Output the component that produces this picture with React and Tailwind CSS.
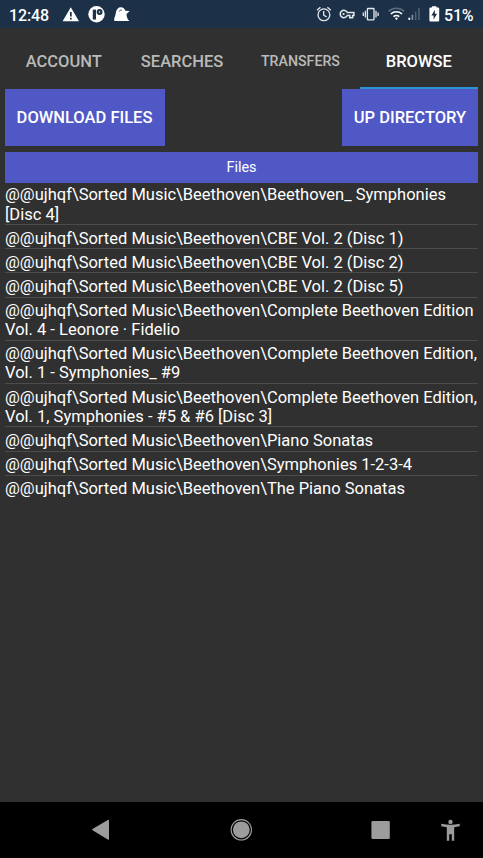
import React from 'react';

const ROOT = '@@ujhqf\\Sorted Music\\Beethoven\\';

const folders = [
  [ROOT + 'Beethoven_ Symphonies', '[Disc 4]'],
  [ROOT + 'CBE Vol. 2 (Disc 1)'],
  [ROOT + 'CBE Vol. 2 (Disc 2)'],
  [ROOT + 'CBE Vol. 2 (Disc 5)'],
  [ROOT + 'Complete Beethoven Edition', 'Vol. 4 - Leonore · Fidelio'],
  [ROOT + 'Complete Beethoven Edition,', 'Vol. 1 - Symphonies_ #9'],
  [ROOT + 'Complete Beethoven Edition,', 'Vol. 1, Symphonies - #5 & #6 [Disc 3]'],
  [ROOT + 'Piano Sonatas'],
  [ROOT + 'Symphonies 1-2-3-4'],
  [ROOT + 'The Piano Sonatas'],
];

function LeftStatusIcons() {
  return (
    <svg className="block h-7 w-[75px] shrink-0" viewBox="60 0 75 28" fill="#fff">
      <path fillRule="evenodd" d="M70.8 7.2 79 21.2H62.6ZM70 12v4.4h1.7V12Zm0 5.8v1.7h1.7v-1.7Z" />
      <circle cx="96.5" cy="14.300" r="8.200" />
      <path d="M92.800 9.600h3.200v9.900h-3.200Z" fill="#1c3148" />
      <circle cx="99.600" cy="12" r="2.900" fill="#1c3148" />
      <circle cx="99.500" cy="12" r=".8" />
      <path d="M114.300 21V17.800c1-1.300 1.200-3 1.600-5.300.5-3.200 2.400-5.200 5-5.200 2.200 0 3.700 1.200 4.500 3.400l4.300.2-3.200 3.200c.2 3 .7 4.900 2.800 6.900Z" />
      <path d="M119.400 11.400a1.500 1.500 0 0 1 2.500-.9" fill="none" stroke="#1c3148" strokeWidth=".9" />
    </svg>
  );
}

function RightStatusIcons() {
  return (
    <svg className="block h-7 w-[128px] shrink-0" viewBox="314 0 128 28" fill="none" stroke="#e4e8ec" strokeWidth="1.3">
      <circle cx="323.900" cy="14.800" r="5.900" />
      <path d="M323.700 11v4.200l2.900 1.700M317 10.200l3.400-2.900M330.800 10.200l-3.400-2.900" />
      <path d="M347.300 12.500h6.600v3h-1.300v2.200h-2.800v-2.200h-2.500a3.700 3.700 0 1 1 0-3Z" strokeWidth="1.500" />
      <circle cx="343.600" cy="14" r="1.100" fill="#e4e8ec" stroke="none" />
      <rect x="367.400" y="8.500" width="6.600" height="11.400" rx=".6" />
      <path d="M365.400 10.800v6.800M363.300 12.400v3.600M376 10.800v6.800M378.100 12.400v3.600" />
      <path d="M388.700 11.300a11.300 11.300 0 0 1 15.400 0" stroke="#596a7b" strokeWidth="1.700" />
      <path d="M390.800 14a8.200 8.200 0 0 1 11.200 0M393.500 16.700a4.500 4.500 0 0 1 5.800 0" stroke="#fff" strokeWidth="1.600" />
      <path d="m394.900 18 1.500 2.300 1.500-2.300a2.500 2.500 0 0 0-3 0Z" fill="#fff" stroke="none" />
      <g stroke="none">
        <path d="M408.400 17.700h1.800v2.200h-1.800Z" fill="#fff" />
        <path d="M411.600 14.700h1.600v5.200h-1.600Z" fill="#8491a0" />
        <path d="M415 11.600h1.400v8.300H415ZM418.200 8h1.500v11.900h-1.500Z" fill="#526476" />
        <path d="M432 6.300h4.500v1.300h1.700q1 0 1 1v12q0 1-1 1h-7.800q-1 0-1-1V8.600q0-1 1-1h1.600Z" fill="#fff" />
        <path d="m434.900 9.700-3.500 5.900h2.200v4l3.500-5.900h-2.200Z" fill="#1c3148" />
      </g>
    </svg>
  );
}

function StatusBar() {
  return (
    <div className="flex h-7 shrink-0 items-center bg-[#1c3148] pl-[9px] font-[Roboto] text-[16px] font-medium text-white">
      <span className="w-[51px] whitespace-nowrap pt-[3px] leading-none tracking-[-0.1px]">12:48</span>
      <LeftStatusIcons />
      <div className="w-[179px] shrink-0" />
      <RightStatusIcons />
      <span className="whitespace-nowrap pl-[2px] pt-[3px] leading-none tracking-[-0.2px]">51%</span>
    </div>
  );
}

function Tabs() {
  return (
    <nav className="grid h-[61px] shrink-0 grid-cols-4 pl-[4.500px] pr-[5px] text-center text-[16.500px] font-medium text-[#bababa]">
      <div className="pt-[24px] leading-[19px]">ACCOUNT</div>
      <div className="pt-[24px] leading-[19px]">SEARCHES</div>
      <div className="pt-[24px] text-[14.200px] leading-[19px]">TRANSFERS</div>
      <div className="border-b-2 border-[#2b95d2] pt-[24px] leading-[19px] text-white">BROWSE</div>
    </nav>
  );
}

function NavigationBar() {
  return (
    <footer className="h-14 shrink-0 bg-black">
      <svg className="block h-14 w-[483px]" viewBox="0 802 483 56" fill="#9c9c9c">
        <path d="M92.500 829.100q-.8.600 0 1.200l15.300 9.300q1.200.6 1.200-.6v-18.400q0-1.200-1.200-.6Z" />
        <circle cx="241.300" cy="829.800" r="8.400" />
        <circle cx="241.300" cy="829.800" r="10.200" fill="none" stroke="#9c9c9c" strokeWidth="1.100" />
        <rect x="371.400" y="821" width="18.400" height="18" rx="1.300" />
        <circle cx="450.500" cy="821.900" r="2.200" />
        <path d="M441.300 823.800c6 1.300 12.400 1.300 18.400 0v2.500l-5.500.9v13.500h-2.400v-6.500h-2.600v6.500h-2.400v-13.500l-5.500-.9Z" />
      </svg>
    </footer>
  );
}

export default function App() {
  return (
    <div className="flex h-[858px] w-[483px] flex-col overflow-hidden bg-[#303030] font-[Roboto,sans-serif] text-white">
      <StatusBar />
      <Tabs />
      <main className="flex min-h-0 flex-1 flex-col px-[5px]">
        <div className="flex h-[57px] shrink-0 justify-between text-[16.500px] font-medium">
          <button className="w-[160px] whitespace-nowrap bg-[#5058c5] pt-[2px] pr-[1px]">DOWNLOAD FILES</button>
          <button className="w-[136px] whitespace-nowrap bg-[#5058c5] pt-[2px]">UP DIRECTORY</button>
        </div>
        <div className="mt-[5.600px] flex h-[31px] shrink-0 items-center justify-center bg-[#5058c5] pt-[1px] text-[14.400px]">Files</div>
        <ul className="pt-[2.800px] text-[16.500px] leading-[19.200px]">
          {folders.map((lines, i) => (
            <li key={i} className="mb-[3.400px] border-b border-[#4c4c4c] pb-[0.500px] last:border-0">
              {lines.map((line) => (
                <div key={line} className="whitespace-nowrap">{line}</div>
              ))}
            </li>
          ))}
        </ul>
      </main>
      <NavigationBar />
    </div>
  );
}
